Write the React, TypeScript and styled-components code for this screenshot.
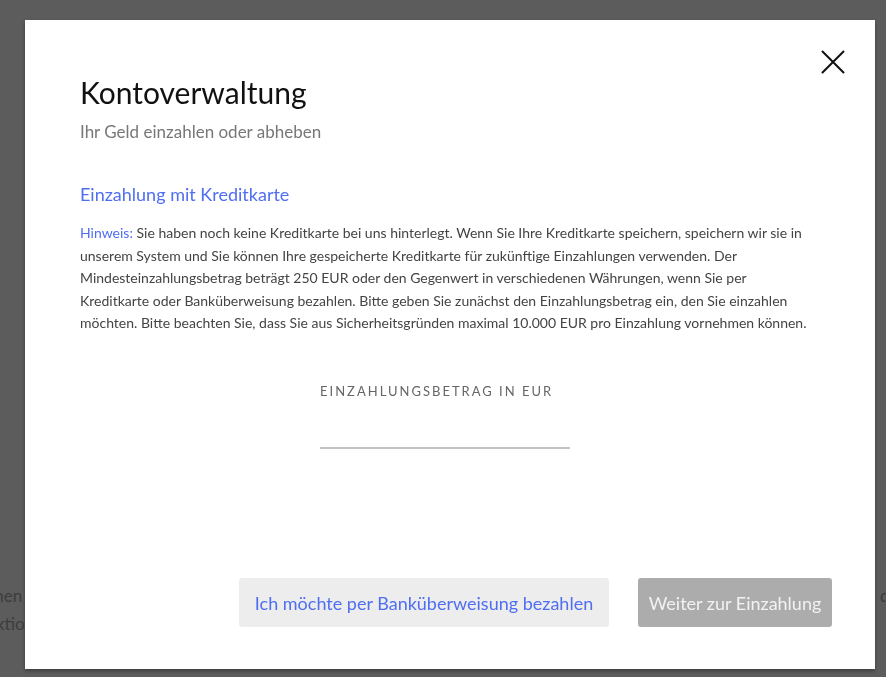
import styled, { createGlobalStyle } from "styled-components";

const GlobalStyle = createGlobalStyle`
  html, body {
    margin: 0;
    padding: 0;
    width: 100%;
    height: 100%;
    overflow: hidden;
    font-family: Lato, "Open Sans", sans-serif;
  }
`;

const CloseIcon = () => (
  <svg width="24" height="24" viewBox="0 0 24 24" aria-hidden="true">
    <path d="M1.5 1.5 L22.5 22.5 M22.5 1.5 L1.5 22.5" stroke="#111" strokeWidth="2" strokeLinecap="round" />
  </svg>
);

const App = () => {
  return (
    <>
      <GlobalStyle />
      <Page>
        <BgLine>
          <BgText $shift={-22}>sehen</BgText>
          <BgText $shift={-12}>da</BgText>
        </BgLine>
        <BgLine>
          <BgText $shift={-32}>Funktion</BgText>
        </BgLine>
      </Page>

      {/* 모달 */}
      <Dim>
        <Dialog>
          <CloseButton aria-label="Schließen">
            <CloseIcon />
          </CloseButton>
          <Title>Kontoverwaltung</Title>
          <Subtitle>Ihr Geld einzahlen oder abheben</Subtitle>

          <SectionTitle>Einzahlung mit Kreditkarte</SectionTitle>
          <Notice>
            <NoticeLabel>Hinweis:</NoticeLabel> Sie haben noch keine Kreditkarte bei uns hinterlegt. Wenn Sie Ihre
            Kreditkarte speichern, speichern wir sie in unserem System und Sie können Ihre gespeicherte Kreditkarte
            für zukünftige Einzahlungen verwenden. Der Mindesteinzahlungsbetrag beträgt 250 EUR oder den Gegenwert in
            verschiedenen Währungen, wenn Sie per Kreditkarte oder Banküberweisung bezahlen. Bitte geben Sie zunächst
            den Einzahlungsbetrag ein, den Sie einzahlen möchten. Bitte beachten Sie, dass Sie aus Sicherheitsgründen
            maximal 10.000 EUR pro Einzahlung vornehmen können.
          </Notice>

          <AmountField>
            <AmountLabel htmlFor="amount">Einzahlungsbetrag in EUR</AmountLabel>
            <AmountInput id="amount" type="text" autoComplete="off" />
          </AmountField>

          <Actions>
            <SecondaryButton>Ich möchte per Banküberweisung bezahlen</SecondaryButton>
            <PrimaryButton disabled>Weiter zur Einzahlung</PrimaryButton>
          </Actions>
        </Dialog>
      </Dim>
    </>
  );
};

const Page = styled.div`
  height: 100vh;
  box-sizing: border-box;
  padding-top: 585px;
  background-color: #ffffff;
  display: flex;
  flex-direction: column;
  gap: 6px;
  overflow: hidden;
`;
const BgLine = styled.div`
  display: flex;
  justify-content: space-between;
  font-size: 17px;
  line-height: 22px;
  color: #aaaaaa;
`;
const BgText = styled.span<{ $shift: number }>`
  margin-left: ${(p) => p.$shift}px;
  margin-right: ${(p) => p.$shift}px;
`;
const Dim = styled.div`
  position: fixed;
  inset: 0;
  background-color: rgba(0, 0, 0, 0.64);
  display: flex;
  align-items: flex-start;
`;
const Dialog = styled.div`
  position: relative;
  box-sizing: border-box;
  width: 850px;
  height: 649px;
  margin: 20px 0 0 25px;
  padding: 52px 43px 42px 55px;
  background-color: #ffffff;
  box-shadow: 0 2px 4px rgba(0, 0, 0, 0.35);
  display: flex;
  flex-direction: column;
`;
const CloseButton = styled.button`
  position: absolute;
  top: 30px;
  right: 30px;
  padding: 0;
  border: 0;
  background: none;
  cursor: pointer;
  display: flex;
`;
const Title = styled.h1`
  margin: 0;
  font-family: Lato, sans-serif;
  font-weight: 400;
  font-size: 30px;
  line-height: 40px;
  color: #111111;
`;
const Subtitle = styled.p`
  margin: 8px 0 0;
  font-size: 17px;
  line-height: 24px;
  color: #777777;
`;
const SectionTitle = styled.h2`
  margin: 38px 0 0;
  font-size: 18px;
  font-weight: 400;
  line-height: 24px;
  color: #4f6ef2;
`;
const Notice = styled.p`
  margin: 16px 23px 0 0;
  font-size: 14px;
  line-height: 22.6px;
  color: #444444;
`;
const NoticeLabel = styled.span`
  color: #4f6ef2;
`;
const AmountField = styled.div`
  margin: 47px 22px 0 0;
  width: 250px;
  align-self: center;
  display: flex;
  flex-direction: column;
  align-items: flex-start;
`;
const AmountLabel = styled.label`
  font-size: 13px;
  line-height: 18px;
  letter-spacing: 2px;
  text-transform: uppercase;
  color: #666666;
`;
const AmountInput = styled.input`
  margin-top: 13px;
  width: 250px;
  height: 36px;
  box-sizing: border-box;
  border: 0;
  border-bottom: 2px solid #c2c2c2;
  outline: none;
  font-family: Lato, sans-serif;
  font-size: 16px;
  text-align: center;
  background: transparent;
`;
const Actions = styled.div`
  margin-top: auto;
  display: flex;
  justify-content: flex-end;
  gap: 29px;
`;
const BaseButton = styled.button`
  height: 49px;
  border: 0;
  border-radius: 3px;
  font-family: Lato, sans-serif;
  font-size: 18px;
  cursor: pointer;
`;
const SecondaryButton = styled(BaseButton)`
  width: 370px;
  background-color: #ededed;
  color: #4f6ef2;
`;
const PrimaryButton = styled(BaseButton)`
  width: 194px;
  background-color: #acacac;
  color: #f2f2f2;
  cursor: default;
`;

export default App;
